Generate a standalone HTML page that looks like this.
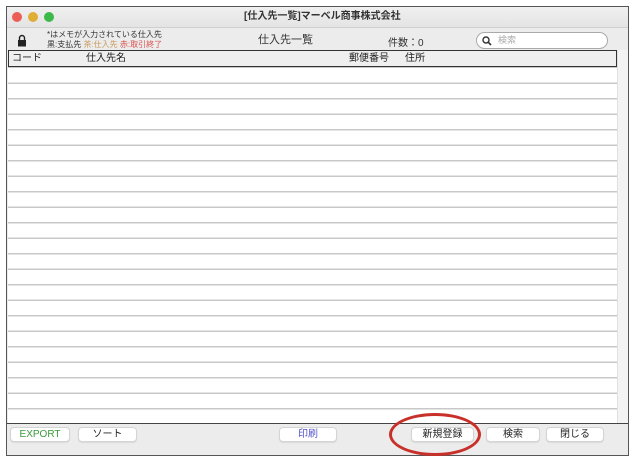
<!DOCTYPE html>
<html><head><meta charset="utf-8"><style>
*{margin:0;padding:0;box-sizing:border-box}
body{width:640px;height:464px;background:#fff;position:relative;overflow:hidden;font-family:"Liberation Sans","Noto Sans CJK JP",sans-serif;color:#222}
.a{position:absolute}
#win{left:6px;top:6px;width:623px;height:450px;border:1px solid #555;background:#ececec}
#title{left:7px;top:7px;width:621px;height:21px;background:linear-gradient(#f0f0f0,#e4e4e4);border-bottom:1px solid #d0d0d0}
.dot{width:10px;height:10px;border-radius:50%;top:12px}
.t{white-space:nowrap;line-height:1}
#tbl{left:8px;top:66px;width:609px;height:357px;background-color:#fff;background-image:repeating-linear-gradient(to bottom,transparent 0,transparent 14px,#c8c8c8 14px,#c8c8c8 15.5px);background-position:0 2.5px}
#hdr{left:8px;top:50px;width:609px;height:17px;background:#efefef;border:1px solid #333}
.btn{height:15px;top:427px;background:#fff;border:1px solid #d4d4d4;border-radius:4px;font-size:10px;text-align:center;line-height:13px;box-shadow:0 1px 1px rgba(0,0,0,.08)}
</style></head><body>
<div id="win" class="a"></div>
<div id="title" class="a"></div>
<div class="a dot" style="left:12px;background:#ec5f57"></div>
<div class="a dot" style="left:28px;background:#e0ad37"></div>
<div class="a dot" style="left:44px;background:#3cb94a"></div>
<div class="a t" style="left:244px;top:12px;font-size:10px;font-weight:bold;color:#333">[仕入先一覧]マーベル商事株式会社</div>
<svg class="a" style="left:17px;top:34px" width="10" height="13" viewBox="0 0 10 13"><path d="M2.5 6V4a2.5 2.5 0 0 1 5 0v2" fill="none" stroke="#222" stroke-width="1.4"/><rect x="1" y="6" width="8" height="6.5" fill="#222"/></svg>
<div class="a t" style="left:47px;top:31px;font-size:8px;color:#333">*はメモが入力されている仕入先</div>
<div class="a t" style="left:47px;top:41px;font-size:8px;color:#333">黒:支払先 <span style="color:#c89a5a">茶:仕入先</span> <span style="color:#d9534f">赤:取引終了</span></div>
<div class="a t" style="left:258px;top:35px;font-size:11px;color:#333">仕入先一覧</div>
<div class="a t" style="left:388px;top:39px;font-size:10px;color:#333">件数：0</div>
<div class="a" style="left:476px;top:32px;width:132px;height:17px;border:1px solid #aaa;border-radius:9px;background:#fff"></div>
<svg class="a" style="left:482px;top:36px" width="10" height="10" viewBox="0 0 10 10"><circle cx="4" cy="4" r="3" fill="none" stroke="#333" stroke-width="1.4"/><path d="M6.2 6.2L9 9" stroke="#333" stroke-width="1.6"/></svg>
<div class="a t" style="left:498px;top:36px;font-size:9px;color:#aaa">検索</div>
<div id="tbl" class="a"></div>
<div class="a" style="left:617px;top:50px;width:11px;height:373px;background:#f3f3f3;border-left:1px solid #e0e0e0"></div>
<div id="hdr" class="a"></div>
<div class="a t" style="left:12px;top:54px;font-size:10px">コード</div>
<div class="a t" style="left:86px;top:54px;font-size:10px">仕入先名</div>
<div class="a t" style="left:349px;top:54px;font-size:10px">郵便番号</div>
<div class="a t" style="left:405px;top:54px;font-size:10px">住所</div>
<div class="a" style="left:7px;top:423px;width:621px;height:1px;background:#444"></div>
<div class="a btn" style="left:10px;width:60px;color:#3a9a3a">EXPORT</div>
<div class="a btn" style="left:78px;width:59px">ソート</div>
<div class="a btn" style="left:279px;width:58px;color:#5555cc">印刷</div>
<div class="a btn" style="left:411px;width:63px">新規登録</div>
<div class="a btn" style="left:486px;width:54px">検索</div>
<div class="a btn" style="left:546px;width:58px">閉じる</div>
<div class="a" style="left:389px;top:413px;width:92px;height:43px;border:3px solid #c8302a;border-radius:50%"></div>
</body></html>
